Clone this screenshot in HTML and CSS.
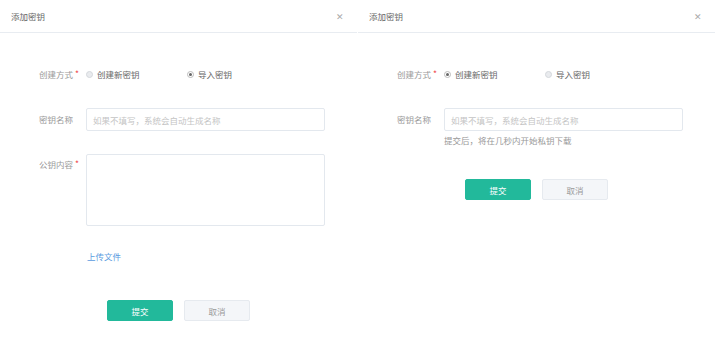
FILE: index.html
```html
<!DOCTYPE html>
<html lang="zh-CN">
<head>
    <meta charset="UTF-8">
    <title>添加密钥</title>
    <link rel="stylesheet" href="styles.css">
</head>
<body>
    <div class="panel">
        <div class="panel-header">
            <span class="panel-title">添加密钥</span>
            <span class="close">&#x2715;</span>
        </div>
        <div class="panel-body">
            <div class="form-row row-radio">
                <label class="form-label">创建方式<span class="req">*</span></label>
                <div class="radio-group">
                    <span class="radio-option"><i class="radio"></i>创建新密钥</span>
                    <span class="radio-option"><i class="radio checked"></i>导入密钥</span>
                </div>
            </div>
            <div class="form-row row-input">
                <label class="form-label">密钥名称</label>
                <div class="control">
                    <div class="input"><span class="placeholder">如果不填写，系统会自动生成名称</span></div>
                </div>
            </div>
            <div class="form-row row-textarea">
                <label class="form-label top">公钥内容<span class="req">*</span></label>
                <div class="control">
                    <div class="textarea"></div>
                    <a class="upload">上传文件</a>
                </div>
            </div>
            <div class="actions actions-import">
                <button class="btn btn-primary">提交</button>
                <button class="btn btn-cancel">取消</button>
            </div>
        </div>
    </div>

    <div class="panel">
        <div class="panel-header">
            <span class="panel-title">添加密钥</span>
            <span class="close">&#x2715;</span>
        </div>
        <div class="panel-body">
            <div class="form-row row-radio">
                <label class="form-label">创建方式<span class="req">*</span></label>
                <div class="radio-group">
                    <span class="radio-option"><i class="radio checked"></i>创建新密钥</span>
                    <span class="radio-option"><i class="radio"></i>导入密钥</span>
                </div>
            </div>
            <div class="form-row row-input">
                <label class="form-label">密钥名称</label>
                <div class="control">
                    <div class="input"><span class="placeholder">如果不填写，系统会自动生成名称</span></div>
                    <div class="hint">提交后，将在几秒内开始私钥下载</div>
                </div>
            </div>
            <div class="actions actions-create">
                <button class="btn btn-primary">提交</button>
                <button class="btn btn-cancel">取消</button>
            </div>
        </div>
    </div>
</body>
</html>
```

FILE: styles.css
```css
body {
    margin: 0;
    display: flex;
    gap: 1px;
    background: #fff;
    font-family: "Noto Sans CJK SC", "Noto Sans", sans-serif;
    font-size: 8.5px;
    color: #666;
}
.panel {
    width: 357px;
    height: 359px;
}
.panel-header {
    height: 32px;
    border-bottom: 1px solid #e8ecf1;
    display: flex;
    align-items: center;
    justify-content: space-between;
    padding: 0 13px 0 11px;
}
.panel-title {
    color: #666;
}
.close {
    color: #aaa;
    font-size: 9px;
}
.panel-body {
    padding: 33px 0 0 39px;
}
.form-row {
    display: flex;
}
.form-label {
    width: 47px;
    flex-shrink: 0;
    color: #999;
    line-height: 23px;
}
.form-label.top {
    line-height: 20px;
}
.req {
    color: #f04c4c;
    margin-left: 2px;
    position: relative;
    top: -1px;
}
.row-radio {
    height: 16px;
    align-items: center;
}
.row-radio .form-label {
    line-height: 16px;
}
.radio-group {
    display: flex;
    align-items: center;
}
.radio-option {
    display: flex;
    align-items: center;
    width: 101px;
    color: #666;
}
.radio {
    width: 5px;
    height: 5px;
    border: 1px solid #d4d8dc;
    border-radius: 50%;
    background: #e9ebee;
    margin-right: 4px;
    position: relative;
}
.radio.checked {
    background: #fff;
    border-color: #bbb;
}
.radio.checked::after {
    content: "";
    position: absolute;
    left: 1px;
    top: 1px;
    width: 3px;
    height: 3px;
    border-radius: 50%;
    background: #666;
}
.row-input {
    margin-top: 26px;
}
.control {
    width: 239px;
}
.input {
    height: 21px;
    border: 1px solid #e3e8ee;
    border-radius: 2px;
    display: flex;
    align-items: center;
    padding-left: 6px;
}
.placeholder {
    color: #c4c4c4;
}
.hint {
    color: #999;
    margin-top: 3px;
    line-height: 12px;
}
.row-textarea {
    margin-top: 23px;
}
.textarea {
    height: 70px;
    border: 1px solid #e3e8ee;
    border-radius: 2px;
}
.upload {
    display: block;
    margin-top: 24px;
    color: #5a9be0;
    line-height: 12px;
    padding-left: 1px;
}
.actions {
    display: flex;
    gap: 11px;
    padding-left: 68px;
}
.actions-import {
    margin-top: 38px;
}
.actions-create {
    margin-top: 33px;
}
.btn {
    width: 66px;
    height: 21px;
    border-radius: 2px;
    font-family: inherit;
    font-size: 8.5px;
    padding: 0;
}
.btn-primary {
    background: #22b99b;
    border: 1px solid #22b99b;
    color: #fff;
}
.btn-cancel {
    background: #f4f6f9;
    border: 1px solid #e6eaef;
    color: #999;
}
```
